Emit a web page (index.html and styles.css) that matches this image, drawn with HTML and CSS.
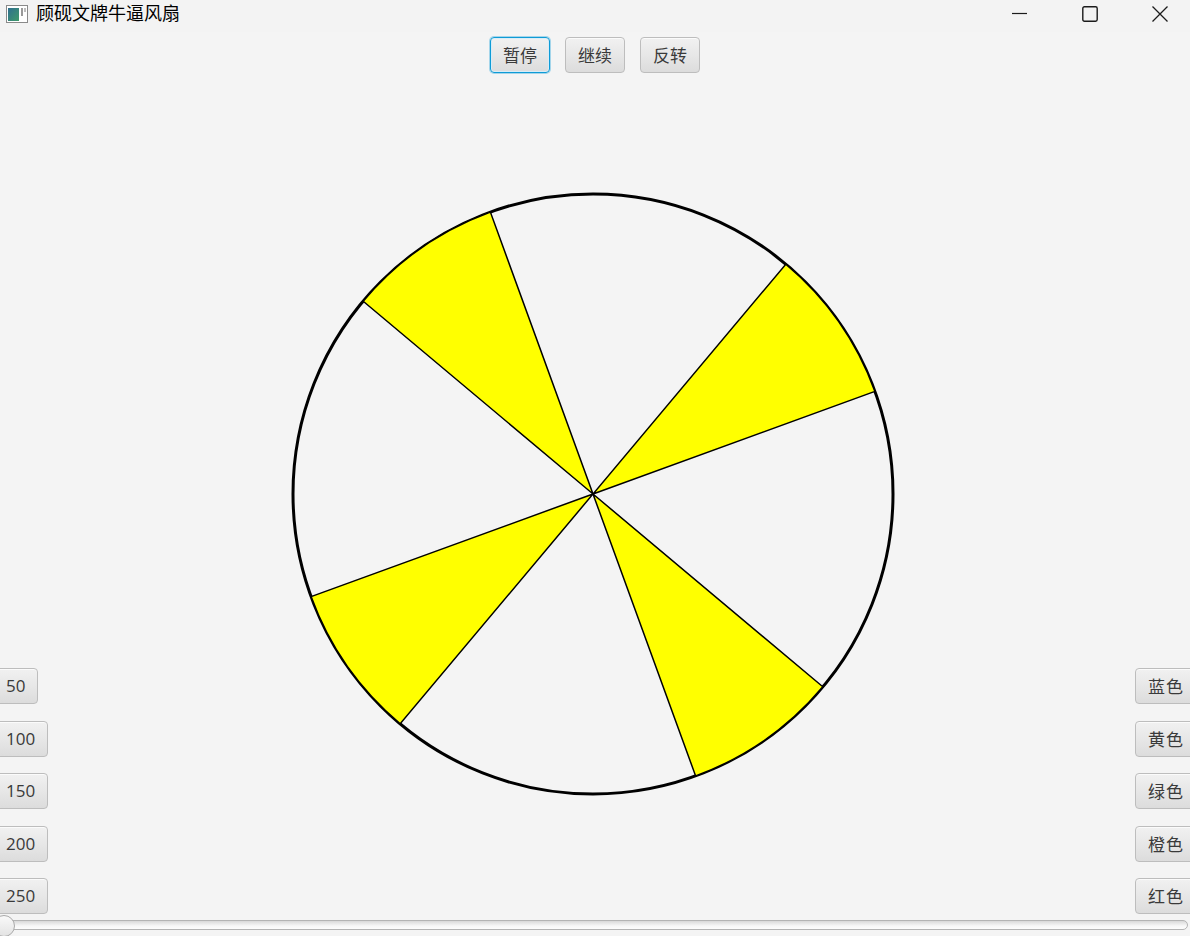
FILE: index.html
```html
<!DOCTYPE html>
<html lang="zh">
<head>
<meta charset="utf-8">
<title>顾砚文牌牛逼风扇</title>
<link rel="stylesheet" href="styles.css">
</head>
<body>
<div class="window">
  <header class="titlebar">
    <div class="title-left">
      <svg class="app-icon" width="22" height="18" viewBox="0 0 22 18">
        <defs>
          <linearGradient id="ig" x1="0" y1="0" x2="1" y2="1">
            <stop offset="0" stop-color="#2f6f8f"/>
            <stop offset="1" stop-color="#3f9a6a"/>
          </linearGradient>
        </defs>
        <rect x="0.5" y="0.5" width="21" height="17" fill="#ffffff" stroke="#8a8a8a"/>
        <rect x="2" y="3" width="11" height="13" fill="url(#ig)"/>
        <rect x="15" y="3" width="2" height="8" fill="#9a9a9a"/>
        <rect x="18" y="3" width="2" height="4" fill="#bdbdbd"/>
      </svg>
      <span class="title-text">顾砚文牌牛逼风扇</span>
    </div>
    <div class="win-controls">
      <svg class="wc wc-min" width="16" height="16" viewBox="0 0 16 16"><path d="M0 8.5H15" stroke="#1b1b1b" stroke-width="1.2"/></svg>
      <svg class="wc wc-max" width="16" height="16" viewBox="0 0 16 16"><rect x="0.8" y="0.8" width="14.4" height="14.4" rx="1.6" fill="none" stroke="#1b1b1b" stroke-width="1.4"/></svg>
      <svg class="wc wc-close" width="16" height="16" viewBox="0 0 16 16"><path d="M0.5 0.5L15.5 15.5M15.5 0.5L0.5 15.5" stroke="#1b1b1b" stroke-width="1.3"/></svg>
    </div>
  </header>

  <main class="app">
    <div class="top">
      <button class="btn focused">暂停</button>
      <button class="btn">继续</button>
      <button class="btn">反转</button>
    </div>

    <div class="left">
      <button class="btn num">50</button>
      <button class="btn num">100</button>
      <button class="btn num">150</button>
      <button class="btn num">200</button>
      <button class="btn num">250</button>
    </div>

    <div class="center">
      <svg class="fan" width="1087" height="841" viewBox="0 0 1087 841">
        <g transform="translate(545 421)">
          <circle cx="0" cy="0" r="300" fill="none" stroke="#000" stroke-width="3"/>
          <path d="M0 0L281.9 -102.6A300 300 0 0 0 192.8 -229.8Z" class="blade"/>
          <path d="M0 0L-102.6 -281.9A300 300 0 0 0 -229.8 -192.8Z" class="blade"/>
          <path d="M0 0L-281.9 102.6A300 300 0 0 0 -192.8 229.8Z" class="blade"/>
          <path d="M0 0L102.6 281.9A300 300 0 0 0 229.8 192.8Z" class="blade"/>
        </g>
      </svg>
    </div>

    <div class="right">
      <button class="btn">蓝色</button>
      <button class="btn">黄色</button>
      <button class="btn">绿色</button>
      <button class="btn">橙色</button>
      <button class="btn">红色</button>
    </div>

    <div class="bottom">
      <div class="slider">
        <div class="track"></div>
        <div class="thumb"></div>
      </div>
    </div>
  </main>
</div>
</body>
</html>
```

FILE: styles.css
```css
html, body {
  margin: 0;
  padding: 0;
}

body {
  width: 1190px;
  height: 936px;
  overflow: hidden;
  background: #f4f4f4;
  font-family: "Open Sans", "Noto Sans CJK SC", sans-serif;
}

.window {
  width: 1190px;
  height: 936px;
  display: flex;
  flex-direction: column;
  overflow: hidden;
}

.titlebar {
  height: 32px;
  flex: 0 0 32px;
  display: flex;
  align-items: flex-start;
  justify-content: space-between;
  background: #f3f3f3;
}

.title-left {
  display: flex;
  align-items: center;
  gap: 8px;
  padding-left: 6px;
  height: 27px;
}

.app-icon {
  display: block;
}

.title-text {
  font-family: "Noto Sans CJK SC", sans-serif;
  font-size: 18px;
  color: #000;
  line-height: 27px;
  position: relative;
  top: -1px;
}

.win-controls {
  display: flex;
  align-items: center;
  gap: 54px;
  padding-right: 22px;
  height: 28px;
}

.wc {
  display: block;
}

.wc-min {
  position: relative;
  top: -1px;
}

.app {
  flex: 1;
  display: grid;
  grid-template-columns: 48px 1fr 55px;
  grid-template-rows: auto 1fr 22px;
  min-height: 0;
}

.top {
  grid-column: 1 / 4;
  display: flex;
  justify-content: center;
  gap: 15px;
  padding-top: 5px;
}

.btn {
  box-sizing: border-box;
  height: 36px;
  padding: 0 12px;
  border: 1px solid #bdbdbd;
  border-radius: 4px;
  background: linear-gradient(#f1f1f1, #e6e6e6 55%, #dcdcdc);
  box-shadow: inset 0 1px 0 #fbfbfb;
  font-family: "Noto Sans CJK SC", sans-serif;
  font-size: 17px;
  line-height: 34px;
  color: #3a3a3a;
  white-space: nowrap;
  text-align: center;
}

.btn.num {
  font-family: "Open Sans", sans-serif;
  font-size: 17px;
  padding: 0 12px;
}

.btn.focused {
  border-color: #0e9bd6;
  box-shadow: 0 0 0 1px rgba(14, 155, 214, 0.35), inset 0 0 0 1px #d8ecf7;
}

.left {
  display: flex;
  flex-direction: column;
  justify-content: flex-end;
  align-items: flex-start;
  gap: 16.5px;
  margin-left: -7px;
}

.right {
  display: flex;
  flex-direction: column;
  justify-content: flex-end;
  align-items: flex-start;
  gap: 16.5px;
}

.right .btn {
  width: 62px;
  padding: 0 0 0 12px;
  text-align: left;
  letter-spacing: 1px;
}

.center {
  position: relative;
  overflow: visible;
}

.fan {
  display: block;
}

.blade {
  fill: #ffff00;
  stroke: #000;
  stroke-width: 1.5;
  stroke-linejoin: miter;
}

.bottom {
  grid-column: 1 / 4;
  padding-top: 1px;
}

.slider {
  position: relative;
  height: 21px;
}

.track {
  position: absolute;
  left: -4px;
  right: 2px;
  top: 5px;
  height: 10px;
  box-sizing: border-box;
  border: 1px solid #b4b4b4;
  border-radius: 5px;
  background: linear-gradient(#d9d9d9, #f7f7f7 60%, #fdfdfd);
}

.thumb {
  position: absolute;
  left: -7px;
  top: 0;
  width: 22px;
  height: 22px;
  box-sizing: border-box;
  border: 1px solid #a9a9a9;
  border-radius: 50%;
  background: linear-gradient(#f9f9f9, #e3e3e3);
}
```
